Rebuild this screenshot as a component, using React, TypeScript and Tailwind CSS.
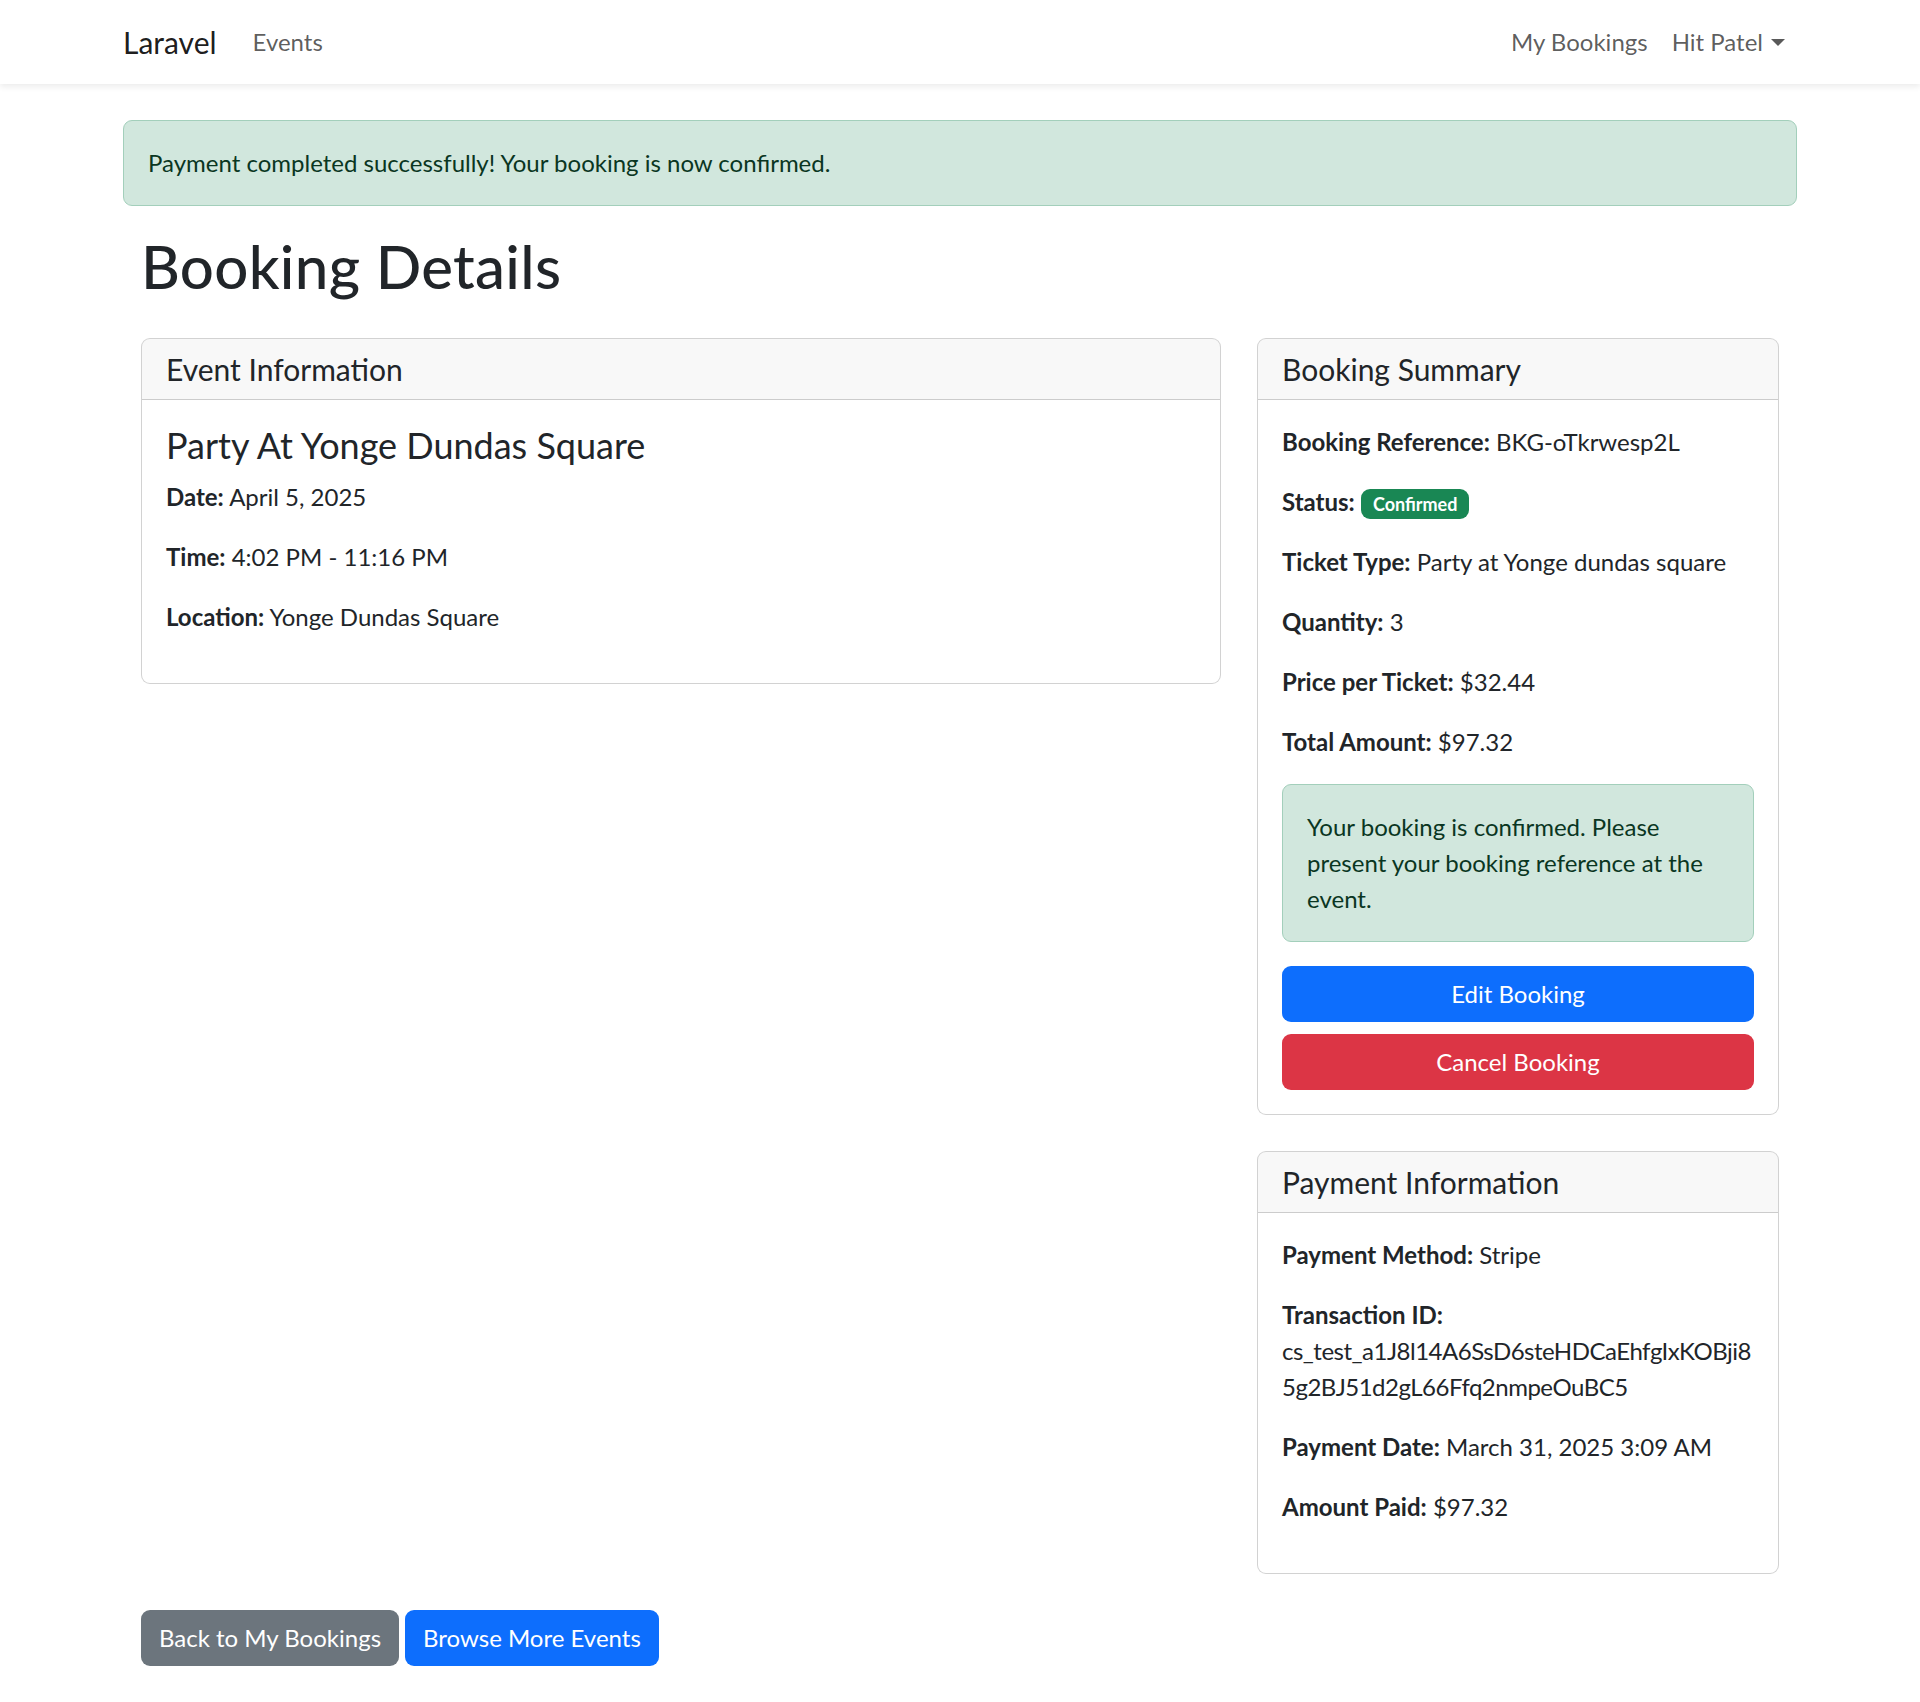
const font = "font-['Lato','Segoe_UI','Liberation_Sans',sans-serif]";

interface IInfoRowProps {
  label: string;
  children: React.ReactNode;
}

const InfoRow = ({ label, children }: IInfoRowProps) => {
  return (
    <p className="mb-[24px] text-[24px] leading-[36px]">
      <strong className="font-bold">{label}</strong> {children}
    </p>
  );
};

interface ICardProps {
  title: string;
  className?: string;
  children: React.ReactNode;
}

const Card = ({ title, className, children }: ICardProps) => {
  return (
    <div className={`border border-[rgba(0,0,0,0.175)] rounded-[9px] overflow-hidden bg-white ${className ?? ""}`}>
      <div className="px-[24px] py-[12px] bg-[rgba(33,37,41,0.03)] border-b border-[rgba(0,0,0,0.175)]">
        <h5 className="text-[30px] leading-[36px] font-normal">{title}</h5>
      </div>
      <div className="p-[24px]">{children}</div>
    </div>
  );
};

const App = () => {
  return (
    <div className={`${font} text-[#212529] bg-white min-h-[1702px]`}>
      <nav className="bg-white shadow-[0_3px_6px_rgba(0,0,0,0.075)] h-[84px]">
        <div className="w-[1710px] mx-auto px-[18px] h-full flex items-center">
          <a className="text-[30px] leading-[45px] text-black/90 mr-[24px]">Laravel</a>
          <a className="px-[12px] py-[12px] text-[24px] leading-[36px] text-black/65">Events</a>

          <div className="ml-auto flex items-center">
            <a className="px-[12px] py-[12px] text-[24px] leading-[36px] text-black/65">My Bookings</a>
            <a className="px-[12px] py-[12px] text-[24px] leading-[36px] text-black/65 flex items-center">
              Hit Patel
              <span className="ml-[8px] w-0 h-0 border-t-[7px] border-t-current border-x-[7px] border-x-transparent"></span>
            </a>
          </div>
        </div>
      </nav>

      <main className="w-[1710px] mx-auto px-[18px] py-[36px]">
        <div className="bg-[#d1e7dd] border border-[#a3cfbb] text-[#0a3622] rounded-[9px] p-[24px] text-[24px] leading-[36px] mb-[24px]">
          Payment completed successfully! Your booking is now confirmed.
        </div>

        <div className="px-[18px]">
          <h1 className="text-[60px] leading-[72px] font-medium mb-[36px] tracking-[0.3px]">Booking Details</h1>

          <div className="flex gap-[36px] items-start">
            <div className="w-[1080px]">
              <Card title="Event Information">
                <h4 className="text-[36px] leading-[43px] font-normal mb-[12px]">Party At Yonge Dundas Square</h4>
                <InfoRow label="Date:">April 5, 2025</InfoRow>
                <InfoRow label="Time:">4:02 PM - 11:16 PM</InfoRow>
                <InfoRow label="Location:">Yonge Dundas Square</InfoRow>
              </Card>
            </div>

            <div className="w-[522px]">
              <Card title="Booking Summary" className="mb-[36px]">
                <InfoRow label="Booking Reference:">BKG-oTkrwesp2L</InfoRow>
                <InfoRow label="Status:">
                  <span className="inline-block bg-[#198754] text-white text-[18px] leading-[18px] font-bold px-[12px] py-[6px] rounded-[9px]">
                    Confirmed
                  </span>
                </InfoRow>
                <InfoRow label="Ticket Type:">Party at Yonge dundas square</InfoRow>
                <InfoRow label="Quantity:">3</InfoRow>
                <InfoRow label="Price per Ticket:">$32.44</InfoRow>
                <InfoRow label="Total Amount:">$97.32</InfoRow>

                <div className="bg-[#d1e7dd] border border-[#a3cfbb] text-[#0a3622] rounded-[9px] p-[24px] text-[24px] leading-[36px] mb-[24px]">
                  Your booking is confirmed. Please present your booking reference at the event.
                </div>

                <div className="grid gap-[12px]">
                  <button className="bg-[#0d6efd] text-white text-[24px] leading-[36px] py-[10px] rounded-[9px]">Edit Booking</button>
                  <button className="bg-[#dc3545] text-white text-[24px] leading-[36px] py-[10px] rounded-[9px]">Cancel Booking</button>
                </div>
              </Card>

              <Card title="Payment Information" className="mb-[36px]">
                <InfoRow label="Payment Method:">Stripe</InfoRow>
                <p className="mb-[24px] text-[24px] leading-[36px]">
                  <strong className="font-bold">Transaction ID:</strong>
                  <span className="block tracking-[-0.5px]">cs_test_a1J8l14A6SsD6steHDCaEhfgIxKOBji8</span>
                  <span className="block tracking-[-0.5px]">5g2BJ51d2gL66Ffq2nmpeOuBC5</span>
                </p>
                <InfoRow label="Payment Date:">March 31, 2025 3:09 AM</InfoRow>
                <InfoRow label="Amount Paid:">$97.32</InfoRow>
              </Card>
            </div>
          </div>

          <div className="flex gap-[6px]">
            <button className="bg-[#6c757d] text-white text-[24px] leading-[36px] px-[18px] py-[10px] rounded-[9px]">Back to My Bookings</button>
            <button className="bg-[#0d6efd] text-white text-[24px] leading-[36px] px-[18px] py-[10px] rounded-[9px]">Browse More Events</button>
          </div>
        </div>
      </main>
    </div>
  );
};

export default App;
